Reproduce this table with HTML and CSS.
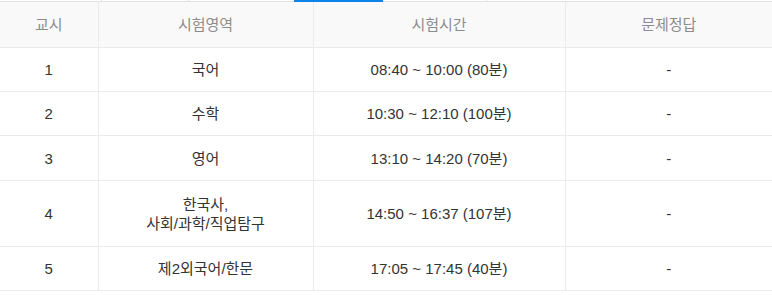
FILE: index.html
```html
<!DOCTYPE html>
<html lang="ko">
<head>
<meta charset="utf-8">
<link rel="stylesheet" href="styles.css">
</head>
<body>
<div class="tabs">
  <span class="tab t1"></span>
  <span class="tab t2"></span>
  <span class="tab t3"></span>
  <span class="tab active"></span>
  <span class="tab t5"></span>
  <span class="tab t6"></span>
</div>
<table class="exam">
  <colgroup>
    <col class="c1"><col class="c2"><col class="c3"><col class="c4">
  </colgroup>
  <thead>
    <tr><th>교시</th><th>시험영역</th><th>시험시간</th><th>문제정답</th></tr>
  </thead>
  <tbody>
    <tr><td>1</td><td>국어</td><td>08:40 ~ 10:00 (80분)</td><td>-</td></tr>
    <tr><td>2</td><td>수학</td><td>10:30 ~ 12:10 (100분)</td><td>-</td></tr>
    <tr class="mid"><td>3</td><td>영어</td><td>13:10 ~ 14:20 (70분)</td><td>-</td></tr>
    <tr class="tall"><td>4</td><td>한국사,<br>사회/과학/직업탐구</td><td>14:50 ~ 16:37 (107분)</td><td>-</td></tr>
    <tr><td>5</td><td>제2외국어/한문</td><td>17:05 ~ 17:45 (40분)</td><td>-</td></tr>
  </tbody>
</table>
</body>
</html>
```

FILE: styles.css
```css
html, body {
  margin: 0;
  padding: 0;
  background: #fff;
}
body {
  font-family: "Liberation Sans", "Noto Sans CJK KR", Arial, sans-serif;
  font-size: 15px;
  color: #333;
}
.tabs {
  display: flex;
  height: 1px;
  border-bottom: 1px solid #e1e1e1;
}
.tab {
  display: block;
  height: 1px;
  border-right: 1px solid #e1e1e1;
}
.t1 { width: 101px; }
.t2 { width: 86px; }
.t3 { width: 105px; border-right: 0; }
.tab.active {
  width: 89px;
  height: 2px;
  background: #0a84e8;
  border-right: 0;
}
.t5 { width: 103px; }
.t6 { flex: 1; border-right: 0; }
.exam {
  width: 772px;
  border-collapse: collapse;
  table-layout: fixed;
}
.c1 { width: 98px; }
.c2 { width: 215px; }
.c3 { width: 252px; }
.c4 { width: 207px; }
.exam th, .exam td {
  border: 1px solid #ebebeb;
  text-align: center;
  padding: 0;
  line-height: 19px;
}
.exam tr > :first-child { border-left: 0; }
.exam tr > :last-child { border-right: 0; }
.exam thead tr > * { border-top: 0; }
.exam th {
  background: #f9f9f9;
  color: #8c8c8c;
  font-weight: normal;
  height: 45px;
}
.exam td {
  height: 43px;
}
.exam tr.mid td {
  height: 44px;
}
.exam tr.tall td {
  height: 65px;
}
```
